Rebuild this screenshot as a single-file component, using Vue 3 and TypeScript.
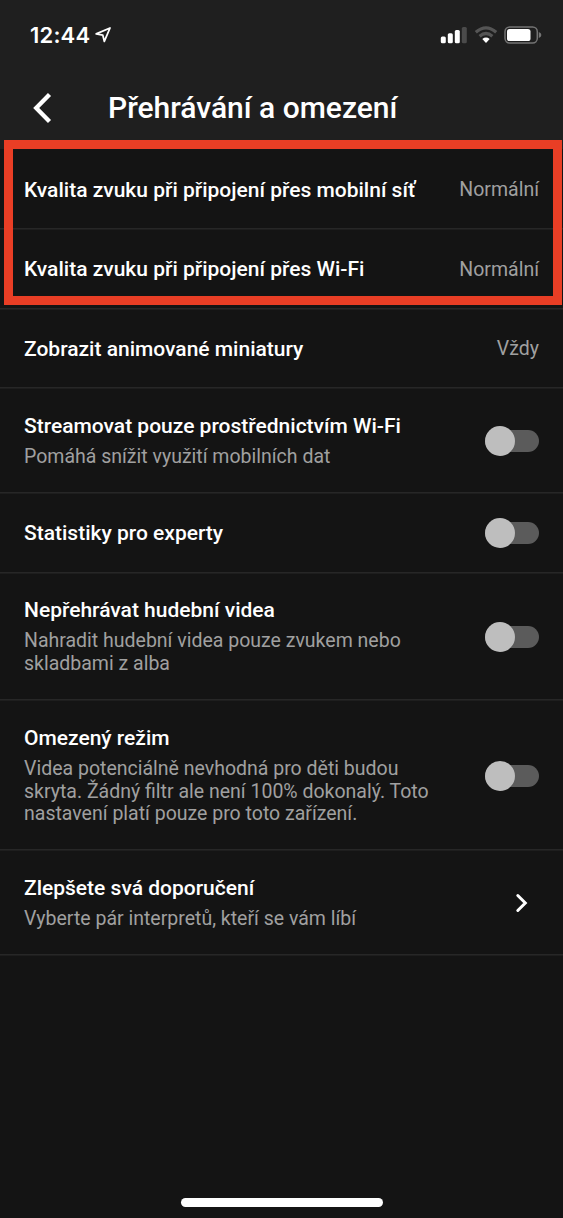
<script setup lang="ts">
interface Setting {
  title: string
  lines?: string[]
  value?: string
  kind: 'value' | 'toggle' | 'link'
  height: number
}

const settings: Setting[] = [
  { title: 'Kvalita zvuku při připojení přes mobilní síť', value: 'Normální', kind: 'value', height: 80 },
  { title: 'Kvalita zvuku při připojení přes Wi-Fi', value: 'Normální', kind: 'value', height: 79.5 },
  { title: 'Zobrazit animované miniatury', value: 'Vždy', kind: 'value', height: 79.5 },
  { title: 'Streamovat pouze prostřednictvím Wi-Fi', lines: ['Pomáhá snížit využití mobilních dat'], kind: 'toggle', height: 105 },
  { title: 'Statistiky pro experty', kind: 'toggle', height: 79.5 },
  { title: 'Nepřehrávat hudební videa', lines: ['Nahradit hudební videa pouze zvukem nebo', 'skladbami z alba'], kind: 'toggle', height: 127.5 },
  { title: 'Omezený režim', lines: ['Videa potenciálně nevhodná pro děti budou', 'skryta. Žádný filtr ale není 100% dokonalý. Toto', 'nastavení platí pouze pro toto zařízení.'], kind: 'toggle', height: 150 },
  { title: 'Zlepšete svá doporučení', lines: ['Vyberte pár interpretů, kteří se vám líbí'], kind: 'link', height: 105 },
]
</script>

<template>
  <div class="screen">
    <header class="top">
      <div class="status">
        <span class="time">12:44</span>
        <svg class="location" width="18" height="18" viewBox="0 0 18 18">
          <path d="M2.2 7.9 L16 2 L10.3 15.4 L8.8 9.1 Z" fill="none" stroke="#fff" stroke-width="1.8" stroke-linejoin="round" />
        </svg>
        <div class="indicators">
          <svg width="27" height="18" viewBox="0 0 27 18">
            <rect x="0.8" y="10.6" width="5" height="6.6" rx="1.5" fill="#fff" />
            <rect x="7.8" y="7.3" width="5" height="9.9" rx="1.5" fill="#fff" />
            <rect x="14.8" y="4" width="5" height="13.2" rx="1.5" fill="#fff" />
            <rect x="21.8" y="1" width="5" height="16.2" rx="1.5" fill="#4b4b4b" />
          </svg>
          <svg class="wifi" width="24" height="18" viewBox="0 0 24 18">
            <path d="M1.8 6.2 Q12 -2.6 22.2 6.2" fill="none" stroke="#555" stroke-width="3.2" />
            <path d="M5.6 10.2 Q12 4.8 18.4 10.2" fill="none" stroke="#555" stroke-width="3.2" />
            <path d="M8.3 13 Q12 10.2 15.7 13 L12 17 Z" fill="#fff" />
          </svg>
          <svg class="battery" width="38" height="18" viewBox="0 0 38 18">
            <rect x="1" y="1" width="32.3" height="16" rx="4.7" fill="none" stroke="#747474" stroke-width="1.5" />
            <rect x="3" y="3" width="23.5" height="12" rx="2.6" fill="#fff" />
            <path d="M34.8 6 Q37.4 7 37.4 9 Q37.4 11 34.8 12 Z" fill="#747474" />
          </svg>
        </div>
      </div>
      <div class="titlebar">
        <svg class="back" width="20" height="32" viewBox="0 0 20 32">
          <path d="M17.5 2.5 L4.2 16 L17.5 29.5" fill="none" stroke="#fff" stroke-width="4.3" />
        </svg>
        <h1>Přehrávání a omezení</h1>
      </div>
    </header>

    <main class="list">
      <section v-for="item in settings" :key="item.title" class="row" :style="{ height: item.height + 'px' }">
        <div class="copy">
          <div class="name">{{ item.title }}</div>
          <div v-if="item.lines" class="note">
            <div v-for="line in item.lines" :key="line">{{ line }}</div>
          </div>
        </div>
        <span v-if="item.kind === 'value'" class="value">{{ item.value }}</span>
        <div v-else-if="item.kind === 'toggle'" class="toggle"><i class="knob"></i></div>
        <svg v-else class="chevron" width="14" height="20" viewBox="0 0 14 20">
          <path d="M2.8 2.5 L10.3 10 L2.8 17.5" fill="none" stroke="#fff" stroke-width="3" stroke-linecap="round" />
        </svg>
      </section>
    </main>

    <div class="highlight"></div>
    <div class="home"></div>
  </div>
</template>

<style>
body {
  background: #141414;
}
</style>

<style scoped>
.screen {
  position: relative;
  box-sizing: border-box;
  width: 563px;
  height: 1218px;
  display: flex;
  flex-direction: column;
  overflow: hidden;
  background: #141414;
  color: #fff;
  font-family: Roboto, "Liberation Sans", sans-serif;
}
.top {
  height: 149px;
  flex: none;
  background: #1f1f1f;
}
.status {
  height: 69px;
  display: flex;
  align-items: center;
  padding: 0 21px 0 30px;
  box-sizing: border-box;
}
.time {
  font: 600 22px/26px Inter, sans-serif;
  letter-spacing: 0.2px;
}
.location {
  margin-left: 4px;
}
.indicators {
  margin-left: auto;
  display: flex;
  align-items: center;
}
.wifi {
  margin-left: 7px;
}
.battery {
  margin-left: 6px;
}
.titlebar {
  height: 78px;
  display: flex;
  align-items: center;
  padding-left: 32px;
}
h1 {
  margin: 0 0 0 56px;
  font-size: 30px;
  line-height: 36px;
  font-weight: 500;
  white-space: nowrap;
}
.row {
  box-sizing: border-box;
  display: flex;
  align-items: center;
  justify-content: space-between;
  padding: 0 24px;
  border-bottom: 1px solid #272727;
  box-shadow: 0 1px 0 #1e1e1e;
}
.copy {
  padding-top: 3px;
}
.name {
  font-size: 21px;
  line-height: 25px;
  font-weight: 500;
  white-space: nowrap;
}
.note {
  margin-top: 7px;
  font-size: 19.5px;
  line-height: 22.8px;
  color: #a0a0a0;
  white-space: nowrap;
}
.value {
  padding-top: 3px;
  font-size: 19.5px;
  line-height: 24px;
  color: #a0a0a0;
}
.toggle {
  width: 54px;
  height: 22px;
  margin-top: 2px;
  flex: none;
  display: flex;
  align-items: center;
  border-radius: 11px;
  background: #5b5b5b;
}
.knob {
  width: 30px;
  height: 30px;
  flex: none;
  border-radius: 50%;
  background: #bebebe;
}
.chevron {
  margin-top: 1px;
  margin-right: 10px;
}
.highlight {
  position: absolute;
  left: 4px;
  top: 140px;
  width: 558px;
  height: 165px;
  box-sizing: border-box;
  border: 9px solid #e93e25;
}
.home {
  width: 202px;
  height: 9px;
  margin: auto auto 11px 181px;
  border-radius: 5px;
  background: #fff;
}
</style>
